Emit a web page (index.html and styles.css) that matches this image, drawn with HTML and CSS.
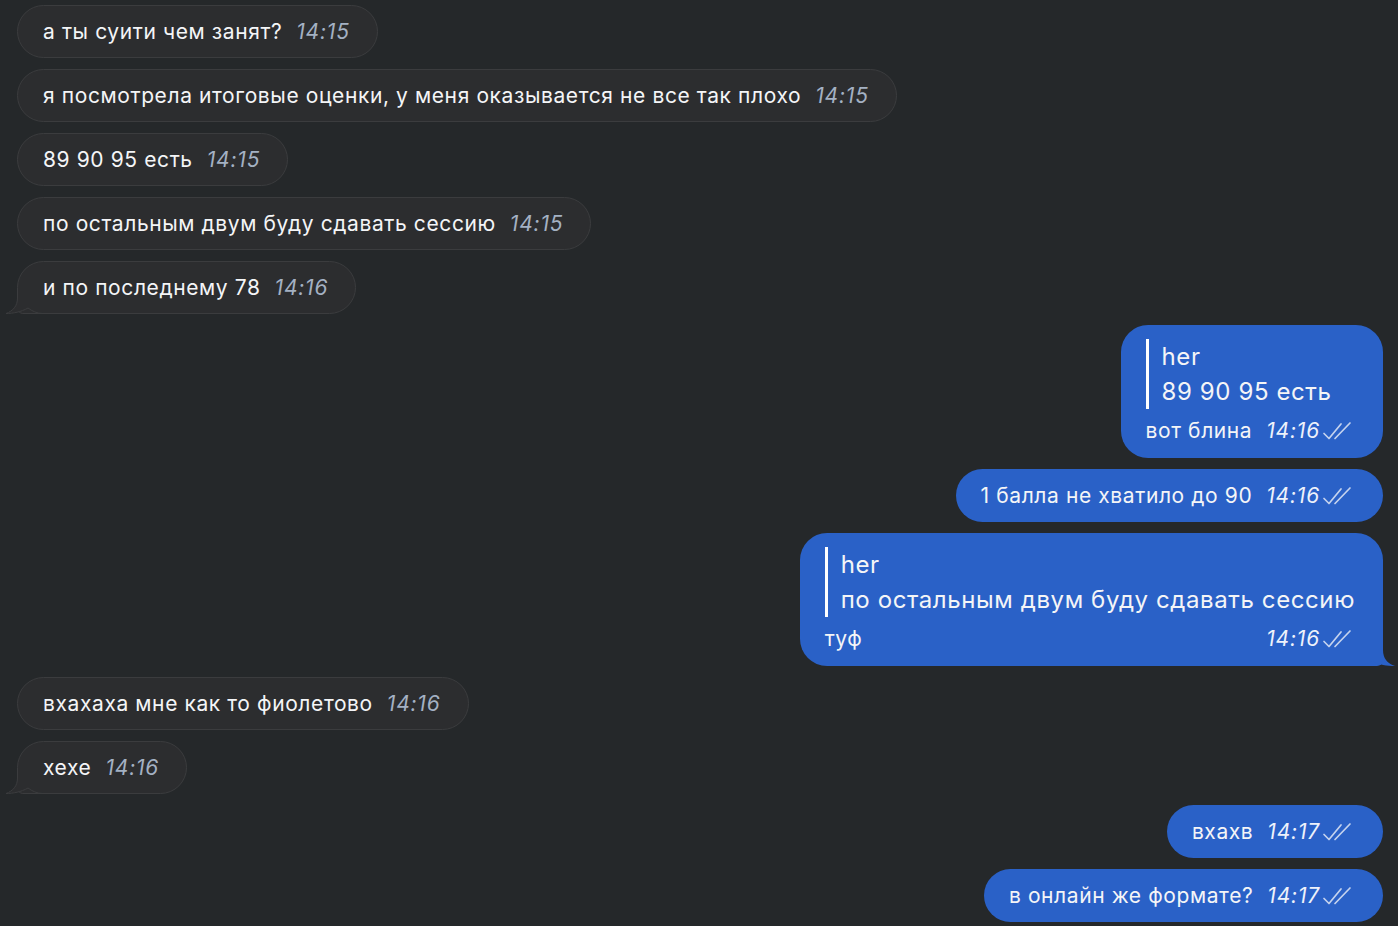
FILE: index.html
```html
<!DOCTYPE html>
<html lang="ru">
<head>
<meta charset="utf-8">
<title>Chat</title>
<link rel="stylesheet" href="styles.css">
</head>
<body>
<div class="chat">
  <div class="msg in"><span class="text">а ты суити чем занят?</span><span class="time">14:15</span></div>
  <div class="msg in"><span class="text">я посмотрела итоговые оценки, у меня оказывается не все так плохо</span><span class="time">14:15</span></div>
  <div class="msg in"><span class="text">89 90 95 есть</span><span class="time">14:15</span></div>
  <div class="msg in"><span class="text">по остальным двум буду сдавать сессию</span><span class="time">14:15</span></div>
  <div class="msg in tailed">
    <svg class="tail" width="44" height="26" viewBox="0 0 44 26"><path class="tail-fill" d="M13 0 H44 V25 H38 C32 25 27 23 23 20 C16 24 8 25.5 1 25.5 C8 23 12.5 18 12.5 10 V0 Z"/><path class="tail-stroke" d="M12.5 0 V10 C12.5 18 8 23 1 25.5 C8 25.5 16 24 23 20 C27 23 32 25.5 38 25.5 H44"/></svg>
    <span class="text">и по последнему 78</span><span class="time">14:16</span>
  </div>

  <div class="msg out reply">
    <div class="quote">
      <div class="q-name">her</div>
      <div class="q-text">89 90 95 есть</div>
    </div>
    <div class="foot"><span class="text">вот блина</span><span class="meta"><span class="time">14:16</span><svg class="checks" width="34" height="20" viewBox="0 0 34 20"><path d="M3 12.5 L8 17.5 L20 3 M14 17.5 L29 2"/></svg></span></div>
  </div>
  <div class="msg out"><span class="text">1 балла не хватило до 90</span><span class="meta"><span class="time">14:16</span><svg class="checks" width="34" height="20" viewBox="0 0 34 20"><path d="M3 12.5 L8 17.5 L20 3 M14 17.5 L29 2"/></svg></span></div>
  <div class="msg out reply tailed">
    <svg class="tail" width="44" height="26" viewBox="0 0 44 26"><path class="tail-fill" d="M13 0 H44 V26 H38 C32 26 27 24 23 21 C16 25 8 26 0 26 C8 23.5 12 18 12 10 V0 Z"/></svg>
    <div class="quote">
      <div class="q-name">her</div>
      <div class="q-text">по остальным двум буду сдавать сессию</div>
    </div>
    <div class="foot"><span class="text">туф</span><span class="meta"><span class="time">14:16</span><svg class="checks" width="34" height="20" viewBox="0 0 34 20"><path d="M3 12.5 L8 17.5 L20 3 M14 17.5 L29 2"/></svg></span></div>
  </div>

  <div class="msg in"><span class="text">вхахаха мне как то фиолетово</span><span class="time">14:16</span></div>
  <div class="msg in tailed">
    <svg class="tail" width="44" height="26" viewBox="0 0 44 26"><path class="tail-fill" d="M13 0 H44 V25 H38 C32 25 27 23 23 20 C16 24 8 25.5 1 25.5 C8 23 12.5 18 12.5 10 V0 Z"/><path class="tail-stroke" d="M12.5 0 V10 C12.5 18 8 23 1 25.5 C8 25.5 16 24 23 20 C27 23 32 25.5 38 25.5 H44"/></svg>
    <span class="text">хехе</span><span class="time">14:16</span>
  </div>

  <div class="msg out"><span class="text">вхахв</span><span class="meta"><span class="time">14:17</span><svg class="checks" width="34" height="20" viewBox="0 0 34 20"><path d="M3 12.5 L8 17.5 L20 3 M14 17.5 L29 2"/></svg></span></div>
  <div class="msg out"><span class="text">в онлайн же формате?</span><span class="meta"><span class="time">14:17</span><svg class="checks" width="34" height="20" viewBox="0 0 34 20"><path d="M3 12.5 L8 17.5 L20 3 M14 17.5 L29 2"/></svg></span></div>
</div>
</body>
</html>
```

FILE: styles.css
```css
html, body {
  margin: 0;
  padding: 0;
  background: #25282a;
  height: 100%;
  overflow: hidden;
}

body {
  font-family: Inter, "Noto Sans", "Liberation Sans", sans-serif;
  color: #f4f5f7;
}

.chat {
  display: flex;
  flex-direction: column;
  gap: 11px;
  padding: 5px 15px 0 17px;
}

.msg {
  position: relative;
  display: flex;
  align-items: center;
  box-sizing: border-box;
  height: 53px;
  padding: 0 27px 0 25px;
  border-radius: 27px;
  font-size: 21px;
  letter-spacing: 0.6px;
  line-height: 30px;
  white-space: nowrap;
}

.text, .time, .meta, .quote, .foot {
  position: relative;
}

.msg.in {
  align-self: flex-start;
  background: #2c2d2f;
  border: 1px solid #3b3c3e;
}

.msg.out {
  align-self: flex-end;
  background: #2a61c7;
  padding-right: 28px;
}

.msg.in.tailed {
  border-bottom-left-radius: 6px;
}

.msg.out.tailed {
  border-bottom-right-radius: 6px;
}

.time {
  font-style: italic;
  margin-left: 14px;
  color: #a4b1c3;
  letter-spacing: 0.8px;
}

.msg.out .time {
  color: #eef2fb;
}

.meta {
  display: flex;
  align-items: center;
  margin-left: 14px;
}

.meta .time {
  margin-left: 0;
}

.checks {
  display: block;
  margin-left: 1px;
  margin-top: 0;
}

.checks path {
  fill: none;
  stroke: #c5d3ee;
  stroke-width: 1.7;
  stroke-linecap: round;
  stroke-linejoin: round;
}

.msg.reply {
  height: auto;
  flex-direction: column;
  align-items: stretch;
  padding: 14px 28px 12px 25px;
}

.quote {
  border-left: 3px solid #ffffff;
  padding-left: 13px;
  font-size: 24px;
  letter-spacing: 0.6px;
  line-height: 35px;
}

.foot {
  display: flex;
  justify-content: space-between;
  align-items: center;
  margin-top: 7px;
  line-height: 30px;
}

.tail {
  position: absolute;
  bottom: -1px;
  left: -13px;
}

.msg.out .tail {
  left: auto;
  right: -12px;
  bottom: 0;
  transform: scaleX(-1);
}

.msg.in .tail-fill {
  fill: #2c2d2f;
}

.msg.out .tail-fill {
  fill: #2a61c7;
}

.tail-stroke {
  fill: none;
  stroke: #3b3c3e;
  stroke-width: 1;
}
```
